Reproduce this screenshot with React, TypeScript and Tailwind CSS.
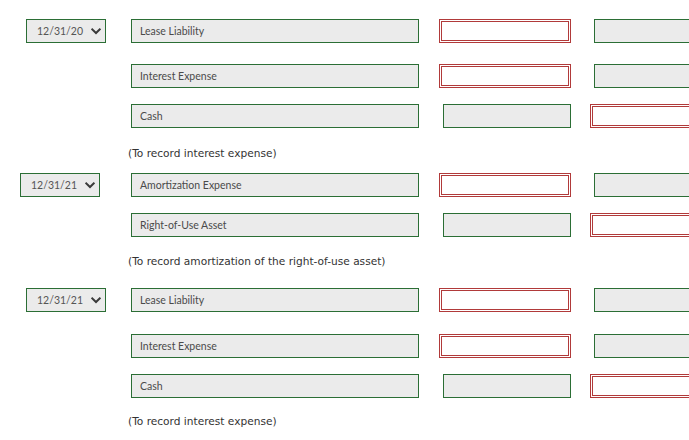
import React from "react";

const GREEN = "border-[#2b6e35]";

function Chevron() {
  return (
    <svg width="10" height="7" viewBox="0 0 10 7" className="shrink-0">
      <polyline points="1.3,1.4 5,5 8.7,1.4" fill="none" stroke="#3a3a3a" strokeWidth="2" strokeLinecap="square" />
    </svg>
  );
}

function Select({ value, left }: { value: string; left: number }) {
  return (
    <div
      className={`h-[24px] w-[80px] border ${GREEN} bg-[#ebebeb] flex items-center pl-[10px] pr-[4px] text-[10.5px] text-[#555]`}
      style={{ marginLeft: left }}
    >
      <span className="pt-[1px]">{value}</span>
      <span className="ml-auto flex items-center">
        <Chevron />
      </span>
    </div>
  );
}

function GreenBox({ className = "" }: { className?: string }) {
  return <div className={`h-[24px] border ${GREEN} bg-[#ebebeb] ${className}`} />;
}

function RedBox({ className = "" }: { className?: string }) {
  return <div className={`h-[24px] border-[3px] border-double border-[#b13a3a] bg-white ${className}`} />;
}

type RowProps = {
  date?: string;
  selLeft?: number;
  account: string;
  debitRed: boolean;
  creditRed: boolean;
  mt: number;
};

function Row({ date, selLeft = 26, account, debitRed, creditRed, mt }: RowProps) {
  return (
    <div className="flex h-[24px]" style={{ marginTop: mt }}>
      <div className="w-[131px] shrink-0">{date && <Select value={date} left={selLeft} />}</div>
      <div
        className={`w-[288px] shrink-0 h-[24px] border ${GREEN} bg-[#ebebeb] flex items-center pl-[8px] pt-[2px] text-[10.5px] text-[#4a4a4a]`}
      >
        {account}
      </div>
      <div className="w-[132px] shrink-0 ml-[20px]">
        {debitRed ? <RedBox className="w-[132px]" /> : <GreenBox className="ml-[4px] w-[128px]" />}
      </div>
      <div className="w-[140px] shrink-0 ml-[19px]">
        {creditRed ? <RedBox className="w-[140px]" /> : <GreenBox className="ml-[4px] w-[136px]" />}
      </div>
    </div>
  );
}

function Note({ text, mt }: { text: string; mt: number }) {
  return (
    <div
      className="h-[16px] leading-[16px] pl-[128px] text-[10.6px] text-[#333]"
      style={{ marginTop: mt, fontFamily: '"DejaVu Sans", sans-serif' }}
    >
      {text}
    </div>
  );
}

export default function App() {
  return (
    <div
      className="w-[689px] h-[440px] overflow-hidden bg-white pt-[19px]"
      style={{ fontFamily: 'Lato, "Noto Sans", sans-serif' }}
    >
      <Row date="12/31/20" account="Lease Liability" debitRed creditRed={false} mt={0} />
      <Row account="Interest Expense" debitRed creditRed={false} mt={21} />
      <Row account="Cash" debitRed={false} creditRed mt={16} />
      <Note text="(To record interest expense)" mt={17} />
      <Row date="12/31/21" selLeft={20} account="Amortization Expense" debitRed creditRed={false} mt={12} />
      <Row account="Right-of-Use Asset" debitRed={false} creditRed mt={16} />
      <Note text="(To record amortization of the right-of-use asset)" mt={16} />
      <Row date="12/31/21" account="Lease Liability" debitRed creditRed={false} mt={19} />
      <Row account="Interest Expense" debitRed creditRed={false} mt={22} />
      <Row account="Cash" debitRed={false} creditRed mt={16} />
      <Note text="(To record interest expense)" mt={15} />
    </div>
  );
}
